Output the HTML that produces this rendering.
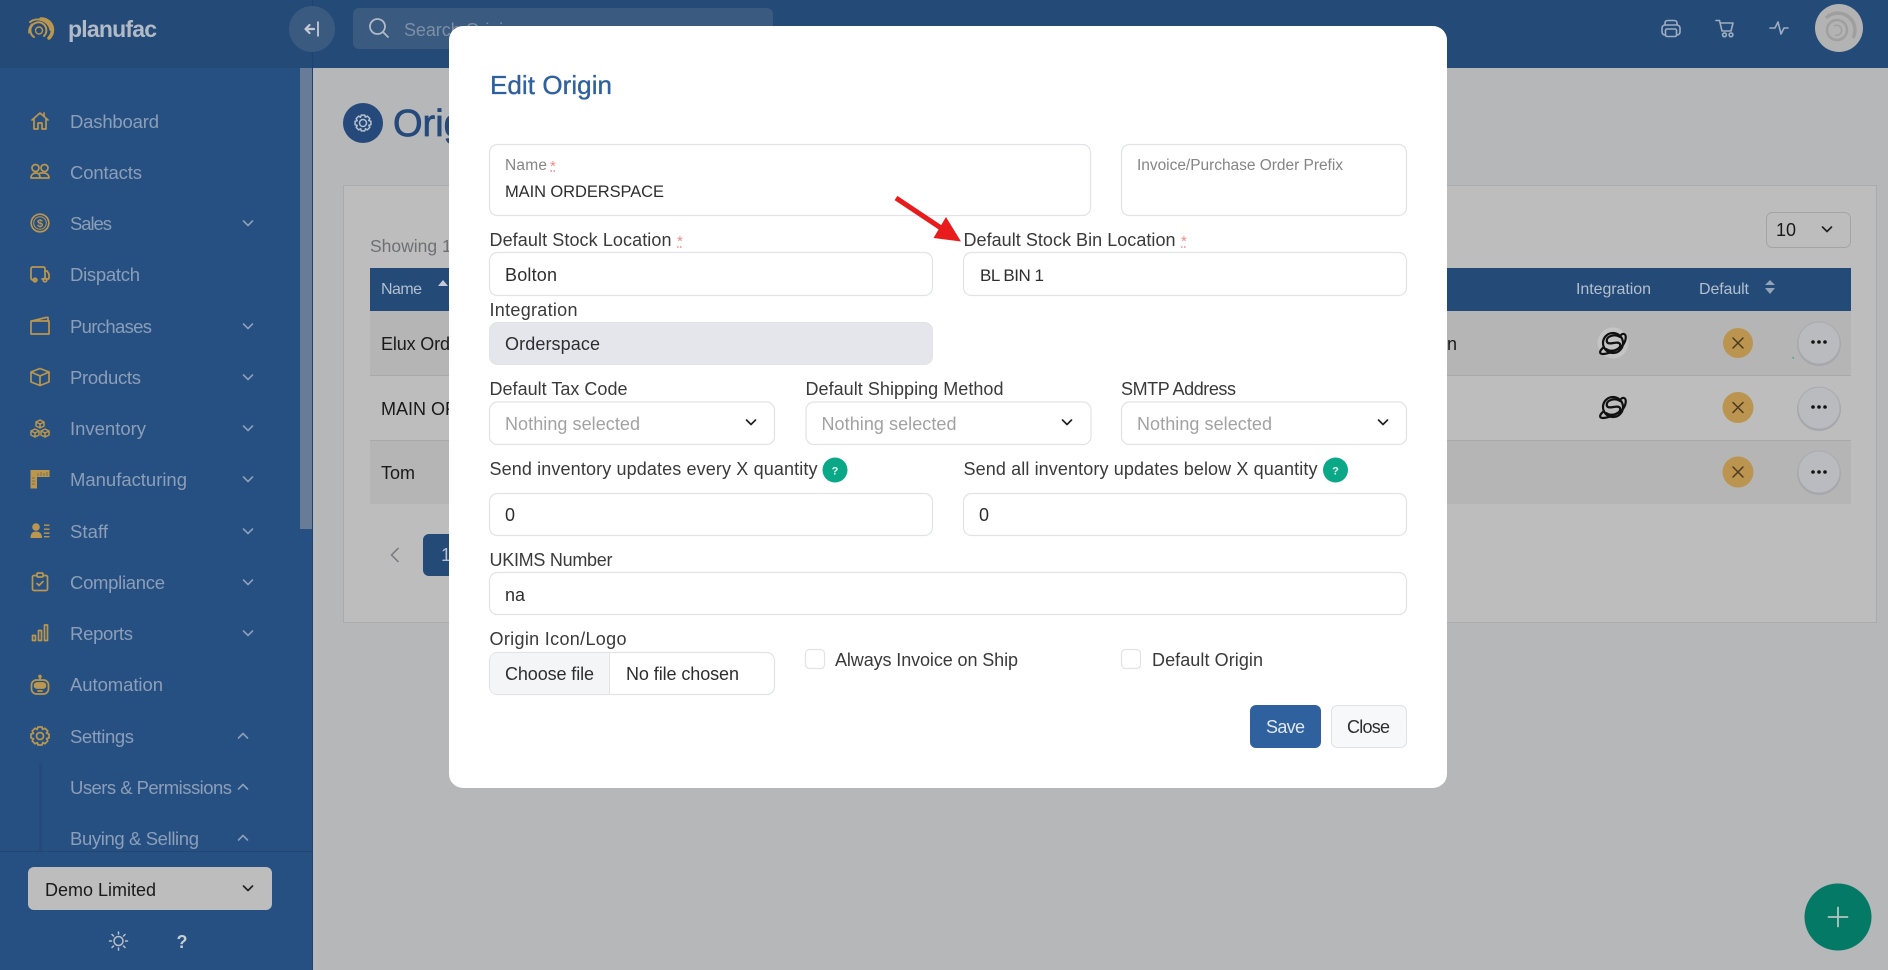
<!DOCTYPE html>
<html lang="en">
<head>
<meta charset="utf-8">
<title>Edit Origin</title>
<style>
html,body{margin:0;padding:0;width:1888px;height:970px;overflow:hidden;background:#b6b7b9}
svg{display:block;position:absolute;left:0;top:0}
text{font-family:"Liberation Sans",Arial,sans-serif;font-size:18px;fill:#333}
.nav{font-size:18.500px;fill:#8c9eb8}
.lab{font-size:18px;fill:#3a3a3a}
.val{font-size:18px;fill:#2e2e2e}
.ph{font-size:18px;fill:#a2a2a2}
.sm{font-size:15.500px;fill:#858585}
.star{font-size:15px;fill:#ef8a8a}
.th{font-size:16px;fill:#b4bfce}
.td{font-size:18px;fill:#1a1a1a}
.in{fill:#fff;stroke:#e1e3e7;stroke-width:1.2}
.ic{fill:none;stroke:#bb964f;stroke-width:1.7;stroke-linecap:round;stroke-linejoin:round}
.chev{fill:none;stroke:#8c9eb8;stroke-width:1.6;stroke-linecap:round;stroke-linejoin:round}
.ck{fill:none;stroke:#222;stroke-width:1.7;stroke-linecap:round;stroke-linejoin:round}
.top{fill:none;stroke:#9fadc0;stroke-width:1.6;stroke-linecap:round;stroke-linejoin:round}
</style>
</head>
<body>
<svg width="1888" height="970" viewBox="0 0 1888 970" xmlns="http://www.w3.org/2000/svg">
<defs>
<path id="gear" d="M-2,-9 L2,-9 L2.6,-6.6 L4.95,-7.78 L7.78,-4.95 L6.5,-2.8 L9,-2 L9,2 L6.6,2.6 L7.78,4.95 L4.95,7.78 L2.8,6.5 L2,9 L-2,9 L-2.6,6.6 L-4.95,7.78 L-7.78,4.95 L-6.5,2.8 L-9,2 L-9,-2 L-6.6,-2.6 L-7.78,-4.95 L-4.95,-7.78 L-2.8,-6.5 Z"/>
<g id="planet" fill="none" stroke="#111" stroke-width="2.200" stroke-linecap="round">
<circle r="10"/>
<path d="M7,-6 C1,-10 -8,-6 -6,-1 C-4,3 5,-3 7,1 C9,6 -1,10 -7,6"/>
<path d="M-9,4 C-14,8 -14,11 -10,11 C-6,11 3,8 9,3 C13,-1 14,-8 11,-9 C10,-9.500 9,-9 8,-8"/>
</g>
<path id="cd" d="M-4.500,-2 L0,2.500 L4.500,-2"/>
<path id="cu" d="M-4.500,2 L0,-2.500 L4.500,2"/>
</defs>

<rect width="1888" height="970" fill="#b6b7b9"/>

<!-- content -->
<circle cx="363" cy="123" r="20" fill="#24497a"/>
<use href="#gear" transform="translate(363,123) scale(.88)" fill="none" stroke="#b7c2d1" stroke-width="1.700" stroke-linejoin="round"/>
<circle cx="363" cy="123" r="3.500" fill="none" stroke="#b7c2d1" stroke-width="1.500"/>
<text x="393" y="136" style="font-size:38px;fill:#24497a;stroke:#24497a;stroke-width:.7">Origins</text>

<rect x="343.500" y="185.500" width="1533" height="437" fill="#bdbdbd" stroke="#aaabad"/>
<text x="370" y="252" style="font-size:17.500px;fill:#6e7073">Showing 1 to 3 of 3</text>

<rect x="1766.500" y="212.500" width="84" height="35" rx="6" fill="#bdbdbd" stroke="#a3a4a6"/>
<text x="1776" y="236" class="td">10</text>
<use href="#cd" transform="translate(1827,229)" class="ck"/>

<rect x="370" y="268" width="1481" height="43" fill="#244a78"/>
<text x="381" y="294" class="th" textLength="41">Name</text>
<path d="M438,286 L443,280 L448,286 Z" fill="#c3cbd7"/>
<text x="1576" y="294" class="th" textLength="75">Integration</text>
<text x="1699" y="294" class="th" textLength="50">Default</text>
<path d="M1765,285 L1770,280 L1775,285 Z M1765,288 L1770,294 L1775,288 Z" fill="#93a3b8"/>

<rect x="370" y="311" width="1481" height="64" fill="#b5b5b5"/>
<rect x="370" y="375" width="1481" height="1" fill="#a9a9aa"/>
<rect x="370" y="376" width="1481" height="64" fill="#bdbdbd"/>
<rect x="370" y="440" width="1481" height="1" fill="#a9a9aa"/>
<rect x="370" y="441" width="1481" height="63" fill="#b5b5b5"/>

<text x="381" y="350" class="td" textLength="132">Elux Orderspace</text>
<text x="381" y="415" class="td">MAIN ORDERSPACE</text>
<text x="381" y="479" class="td" textLength="34">Tom</text>
<text x="1447" y="350" class="td">n</text>

<circle cx="1613" cy="343" r="15.500" fill="#c4c4c4"/>
<use href="#planet" transform="translate(1613,343)"/>
<use href="#planet" transform="translate(1613,407)"/>

<g fill="#bb9550">
<circle cx="1738" cy="343" r="15"/><circle cx="1738" cy="407.500" r="15.500"/><circle cx="1738" cy="472" r="15.500"/>
</g>
<g stroke="#4a3a22" stroke-width="1.500" stroke-linecap="round">
<path d="M1733,338 L1743,348 M1743,338 L1733,348"/>
<path d="M1733,402.500 L1743,412.500 M1743,402.500 L1733,412.500"/>
<path d="M1733,467 L1743,477 M1743,467 L1733,477"/>
</g>
<g fill="#a4a6ab">
<circle cx="1819" cy="344" r="22"/><circle cx="1819" cy="409" r="22"/><circle cx="1819" cy="473" r="22"/>
</g>
<g fill="#babbbe" stroke="#a9abb1" stroke-width="1">
<circle cx="1819" cy="343" r="21"/><circle cx="1819" cy="408" r="21"/><circle cx="1819" cy="472" r="21"/>
</g>
<g fill="#111">
<circle cx="1813" cy="342" r="1.800"/><circle cx="1819" cy="342" r="1.800"/><circle cx="1825" cy="342" r="1.800"/>
<circle cx="1813" cy="407" r="1.800"/><circle cx="1819" cy="407" r="1.800"/><circle cx="1825" cy="407" r="1.800"/>
<circle cx="1813" cy="472" r="1.800"/><circle cx="1819" cy="472" r="1.800"/><circle cx="1825" cy="472" r="1.800"/>
</g>
<rect x="1792.500" y="357" width="1.500" height="1.500" fill="#3a9c9c"/>

<path d="M398.500,548 L391.500,555 L398.500,562" fill="none" stroke="#777a7e" stroke-width="1.500"/>
<rect x="423" y="534" width="60" height="42" rx="6" fill="#244a78"/>
<text x="441" y="561" style="font-size:18px;fill:#b6c0cf">1</text>

<!-- FAB -->
<circle cx="1838" cy="917" r="33.500" fill="#047a66"/>
<path d="M1828.500,917 H1847.500 M1838,907.500 V926.500" stroke="#b2c6c2" stroke-width="1.800" stroke-linecap="round"/>

<!-- top bar -->
<rect x="0" y="0" width="1888" height="68" fill="#244a78"/>
<rect x="312" y="0" width="1" height="970" fill="#1f4270"/>
<g fill="none" stroke="#bb964f" stroke-linecap="round">
<path d="M30,22 A13,13 0 0 1 50.500,30" stroke-width="2"/>
<path d="M41,19 A11,11 0 0 1 49,38" stroke-width="3.500"/>
<path d="M29,33 A11,11 0 0 1 32,24" stroke-width="1.500"/>
<path d="M34,37 A8,8 0 1 1 44,36" stroke-width="2"/>
<circle cx="39" cy="30.500" r="3.500" stroke-width="1.400"/>
</g>
<text x="68" y="37" textLength="89" style="font-size:23px;font-weight:bold;fill:#b2bac6">planufac</text>
<circle cx="312" cy="29" r="23" fill="#3a5a80"/>
<path d="M314,29 H306 M309.500,25 L305.500,29 L309.500,33" fill="none" stroke="#c2cad5" stroke-width="2.200" stroke-linecap="round" stroke-linejoin="round"/>
<path d="M318,21.500 V36.500" stroke="#c2cad5" stroke-width="1.800"/>
<rect x="353" y="8" width="420" height="41" rx="6" fill="#3a5a80"/>
<circle cx="377.500" cy="26.500" r="7.500" fill="none" stroke="#b0bac6" stroke-width="1.800"/>
<path d="M383,32 L388,37" stroke="#b0bac6" stroke-width="1.800" stroke-linecap="round"/>
<text x="404" y="36" style="font-size:18px;fill:#7d8ea6" textLength="118">Search Origins</text>

<!-- top right icons -->
<g class="top">
<path d="M1665,25 V23 Q1665,20.500 1668,20.500 H1674 Q1677,20.500 1677,23 V25"/>
<rect x="1662" y="25" width="18" height="10" rx="3"/>
<rect x="1665.500" y="29" width="11" height="7.500" rx="1.500" fill="#244a78"/>
<path d="M1716,20.500 H1719.500 L1722,31 H1731 L1733,23 H1720"/>
<circle cx="1724.500" cy="34.800" r="1.900"/><circle cx="1731" cy="34.800" r="1.900"/>
<path d="M1770,28 H1775 L1778,22 L1781,34 L1784,28 H1788"/>
</g>
<circle cx="1839" cy="28" r="24" fill="#b3b3b3"/>
<g fill="none" stroke="#9f9f9f">
<path d="M1826,18 A17,17 0 0 1 1853,38" stroke-width="3.500"/>
<circle cx="1837" cy="30" r="10" stroke-width="2.500"/>
<path d="M1834,26 A5,5 0 1 1 1835,35" stroke-width="1.500"/>
</g>

<!-- sidebar -->
<rect x="0" y="68" width="312" height="902" fill="#265082"/>
<rect x="312" y="68" width="1" height="902" fill="#1f4270"/>
<rect x="300" y="68" width="12" height="461" fill="#687c98"/>

<!-- sidebar icons -->
<g class="ic">
<path transform="translate(40,121)" d="M-8,-1 L0,-8 L8,-1 M-6,-2 V8 H-2 V2 H2 V8 H6 V-2 M4,-5 V-8"/>
<g transform="translate(40,172)">
<circle cx="-4.500" cy="-4" r="3.500"/><circle cx="4.500" cy="-4" r="3.500"/>
<path d="M-9,6 C-9,2 -6,1 -4,1 C-1,1 0,3 0,6 Z M0,1 C2,1 9,0 9,6 H1"/>
</g>
<g transform="translate(40,223)">
<circle r="8.800"/><circle r="6.300" stroke-width="1"/>
</g>
<g transform="translate(40,274)">
<path d="M-3,6 H-7 Q-9,6 -9,4 V-5 Q-9,-7 -7,-7 H3 Q5,-7 5,-5 V5 H2"/>
<path d="M5,-3 H7 L9,0 V4 Q9,5 8,5 H7.500"/>
<circle cx="-5" cy="6" r="1.800"/><circle cx="5" cy="6" r="1.800"/>
</g>
<g transform="translate(40,326)">
<rect x="-9" y="-5" width="18" height="13"/>
<path d="M-8,-5 L6,-8.500 H8 V-5"/>
</g>
<path transform="translate(40,377)" d="M0,-8.500 L9,-5 V5 L0,8.500 L-9,5 V-5 Z M-9,-5 L0,-1 L9,-5 M0,-1 V8.500"/>
<g transform="translate(40,429)" stroke-width="1.500">
<path d="M0,-9 L4,-7 V-3 L0,-1 L-4,-3 V-7 Z M-4,-7 L0,-5 L4,-7 M0,-5 V-1"/>
<path d="M-5,0 L-1,2 V6 L-5,8 L-9,6 V2 Z M-9,2 L-5,4 L-1,2 M-5,4 V8"/>
<path d="M5,0 L9,2 V6 L5,8 L1,6 V2 Z M1,2 L5,4 L9,2 M5,4 V8"/>
</g>
<g transform="translate(40,582)">
<rect x="-7.500" y="-6.500" width="15" height="15" rx="1.500"/>
<rect x="-3" y="-9" width="6" height="4" rx="1" fill="#265082"/>
<path d="M-3,1.500 L-1,3.500 L3,-.5"/>
</g>
<g transform="translate(40,633)">
<rect x="-7.500" y="2.500" width="3" height="5"/>
<rect x="-1.500" y="-2.500" width="3" height="10"/>
<rect x="4.500" y="-8" width="3" height="15.500"/>
</g>
<g transform="translate(40,684)">
<rect x="-8.500" y="-4" width="17" height="14" rx="5"/>
<path d="M0,-4 V-6.500"/><circle cx="0" cy="-7.500" r="1"/>
<rect x="-5.500" y="-1" width="11" height="5" rx="2.500" fill="#bb964f"/>
<path d="M-2,7 H2"/>
</g>
<use href="#gear" transform="translate(40,736)"/>
<circle cx="40" cy="736" r="3.500"/>
</g>
<text x="40" y="227" text-anchor="middle" style="font-size:11px;font-weight:bold;fill:#bb964f">$</text>
<path transform="translate(40,479)" d="M-9.500,-9 H9.500 V-2 H-3 V9.500 H-9.500 Z" fill="#bb964f"/>
<path transform="translate(40,479)" d="M-2,-6 V-3 M1,-7 V-3 M4,-6 V-3 M7,-7 V-3 M-8,-1 H-5 M-8,2 H-5 M-8,5 H-5" stroke="#7f6f4a" stroke-width="1"/>
<g transform="translate(40,531)" fill="#bb964f">
<circle cx="-4" cy="-4" r="3.800"/>
<path d="M-9.500,7 C-9.500,2 -7,.5 -4,.5 C-1,.5 2,2 2,7 Z"/>
<rect x="4" y="-6.500" width="5.500" height="1.400"/><rect x="4" y="-2.500" width="5.500" height="1.400"/><rect x="4" y="1.500" width="5.500" height="1.400"/><rect x="4" y="5" width="5.500" height="1.400"/>
</g>

<!-- sidebar text -->
<text x="70" y="128" class="nav" textLength="89">Dashboard</text>
<text x="70" y="179" class="nav" textLength="72">Contacts</text>
<text x="70" y="230" class="nav" textLength="42">Sales</text>
<text x="70" y="281" class="nav" textLength="70">Dispatch</text>
<text x="70" y="333" class="nav" textLength="82">Purchases</text>
<text x="70" y="384" class="nav" textLength="71">Products</text>
<text x="70" y="435" class="nav" textLength="76">Inventory</text>
<text x="70" y="486" class="nav" textLength="117">Manufacturing</text>
<text x="70" y="538" class="nav" textLength="38">Staff</text>
<text x="70" y="589" class="nav" textLength="95">Compliance</text>
<text x="70" y="640" class="nav" textLength="63">Reports</text>
<text x="70" y="691" class="nav" textLength="93">Automation</text>
<text x="70" y="743" class="nav" textLength="64">Settings</text>
<text x="70" y="794" class="nav" textLength="162">Users &amp; Permissions</text>
<text x="70" y="845" class="nav" textLength="129">Buying &amp; Selling</text>

<g class="chev">
<use href="#cd" transform="translate(248,223)"/>
<use href="#cd" transform="translate(248,326)"/>
<use href="#cd" transform="translate(248,377)"/>
<use href="#cd" transform="translate(248,428)"/>
<use href="#cd" transform="translate(248,479)"/>
<use href="#cd" transform="translate(248,531)"/>
<use href="#cd" transform="translate(248,582)"/>
<use href="#cd" transform="translate(248,633)"/>
<use href="#cu" transform="translate(243,736)"/>
<use href="#cu" transform="translate(243,787)"/>
<use href="#cu" transform="translate(243,838)"/>
</g>
<rect x="39" y="764" width="3" height="87" fill="#24497a"/>

<!-- sidebar bottom -->
<rect x="0" y="851" width="312" height="119" fill="#265082"/>
<rect x="0" y="851" width="312" height="1" fill="#224774"/>
<rect x="28" y="867" width="244" height="43" rx="6" fill="#bdbdbd"/>
<text x="45" y="896" class="td" textLength="111">Demo Limited</text>
<use href="#cd" transform="translate(248,888)" class="ck"/>
<circle cx="118.500" cy="941" r="4.500" fill="none" stroke="#b9c0c9" stroke-width="1.500"/>
<path d="M118.500,932 V934 M118.500,948 V950 M109.500,941 H111.500 M125.500,941 H127.500 M112,934.500 L113.500,936 M123.500,946 L125,947.500 M125,934.500 L123.500,936 M113.500,946 L112,947.500" stroke="#b9c0c9" stroke-width="1.500" stroke-linecap="round"/>
<text x="182" y="948" text-anchor="middle" style="font-size:18px;font-weight:bold;fill:#c6ccd4">?</text>

<!-- modal -->
<rect x="449" y="26" width="998" height="762" rx="14" fill="#fff"/>
<text x="490" y="94" textLength="122" style="font-size:26px;fill:#2f619f;stroke:#2f619f;stroke-width:.35">Edit Origin</text>

<rect class="in" x="489.500" y="144.500" width="601" height="71" rx="8"/>
<text x="505" y="170" class="sm" textLength="42">Name</text>
<text x="550" y="171" class="star">*</text>
<path d="M550.500,171 h1.500 M553.500,171 h1.500" stroke="#ef8a8a" stroke-width="1.500"/>
<text x="505" y="197" class="val" textLength="159" style="font-size:16.500px">MAIN ORDERSPACE</text>

<rect class="in" x="1121.500" y="144.500" width="285" height="71" rx="8"/>
<text x="1137" y="170" class="sm" textLength="206">Invoice/Purchase Order Prefix</text>

<text x="489.500" y="246" class="lab" textLength="182">Default Stock Location</text>
<text x="677" y="246" class="star">*</text>
<path d="M677,247 h1.500 M680,247 h1.500" stroke="#ef8a8a" stroke-width="1.500"/>
<rect class="in" x="489.500" y="252.500" width="443" height="43" rx="8"/>
<text x="505" y="281" class="val" textLength="52">Bolton</text>

<text x="963.500" y="246" class="lab" textLength="212">Default Stock Bin Location</text>
<text x="1181" y="246" class="star">*</text>
<path d="M1181,247 h1.500 M1184,247 h1.500" stroke="#ef8a8a" stroke-width="1.500"/>
<rect class="in" x="963.500" y="252.500" width="443" height="43" rx="8"/>
<text x="980" y="281" class="val" textLength="64" style="font-size:17px">BL BIN 1</text>

<text x="489.500" y="316" class="lab" textLength="88">Integration</text>
<rect x="489.500" y="322.500" width="443" height="42" rx="8" fill="#e5e6eb" stroke="#e1e3e7"/>
<text x="505" y="350" class="val" textLength="95">Orderspace</text>

<text x="489.500" y="395" class="lab" textLength="138">Default Tax Code</text>
<text x="805.500" y="395" class="lab" textLength="198">Default Shipping Method</text>
<text x="1121" y="395" class="lab" textLength="115">SMTP Address</text>
<rect class="in" x="489.500" y="402" width="285" height="42.500" rx="8"/>
<rect class="in" x="806" y="402" width="285" height="42.500" rx="8"/>
<rect class="in" x="1121.500" y="402" width="285" height="42.500" rx="8"/>
<text x="505" y="430" class="ph" textLength="135">Nothing selected</text>
<text x="821.500" y="430" class="ph" textLength="135">Nothing selected</text>
<text x="1137" y="430" class="ph" textLength="135">Nothing selected</text>
<use href="#cd" transform="translate(751,422)" class="ck"/>
<use href="#cd" transform="translate(1067,422)" class="ck"/>
<use href="#cd" transform="translate(1383,422)" class="ck"/>

<text x="489.500" y="475" class="lab" textLength="328">Send inventory updates every X quantity</text>
<circle cx="835" cy="470" r="12.500" fill="#0ba888"/>
<text x="835" y="474.500" text-anchor="middle" style="font-size:11px;font-weight:bold;fill:#e8f6f2">?</text>
<text x="963.500" y="475" class="lab" textLength="354">Send all inventory updates below X quantity</text>
<circle cx="1335.500" cy="470" r="12.500" fill="#0ba888"/>
<text x="1335.500" y="474.500" text-anchor="middle" style="font-size:11px;font-weight:bold;fill:#e8f6f2">?</text>

<rect class="in" x="489.500" y="493.500" width="443" height="42" rx="8"/>
<rect class="in" x="963.500" y="493.500" width="443" height="42" rx="8"/>
<text x="505" y="521" class="val">0</text>
<text x="979" y="521" class="val">0</text>

<text x="489.500" y="566" class="lab" textLength="123">UKIMS Number</text>
<rect class="in" x="489.500" y="572.500" width="917" height="42" rx="8"/>
<text x="505" y="601" class="val" textLength="20">na</text>

<text x="489.500" y="645" class="lab" textLength="137">Origin Icon/Logo</text>
<rect class="in" x="489.500" y="652.500" width="285" height="42" rx="8"/>
<path d="M609.500,653 H497.500 Q490,653 490,660.500 V686.500 Q490,694 497.500,694 H609.500 Z" fill="#f4f5f7"/>
<rect x="609" y="652.500" width="1" height="42" fill="#e1e3e7"/>
<text x="505" y="680" class="val" textLength="89">Choose file</text>
<text x="626" y="680" class="val" textLength="113">No file chosen</text>

<rect class="in" x="805.500" y="649.500" width="19" height="19" rx="4"/>
<text x="835" y="666" class="lab" textLength="183">Always Invoice on Ship</text>
<rect class="in" x="1121.500" y="649.500" width="19" height="19" rx="4"/>
<text x="1152" y="666" class="lab" textLength="111">Default Origin</text>

<rect x="1250" y="705" width="71" height="43" rx="6" fill="#2f619f"/>
<text x="1266" y="733" style="font-size:18px;fill:#dfe7f1" textLength="39">Save</text>
<rect x="1331.500" y="705.500" width="75" height="42" rx="6" fill="#f7f8fa" stroke="#dfe1e6"/>
<text x="1347" y="733" class="val" textLength="43">Close</text>

<!-- red arrow -->
<path d="M896,198 L941,228" stroke="#e81c1c" stroke-width="5" fill="none"/>
<path d="M946,217 L933.500,238 L961,241.500 Z" fill="#e81c1c"/>
</svg>
</body>
</html>
